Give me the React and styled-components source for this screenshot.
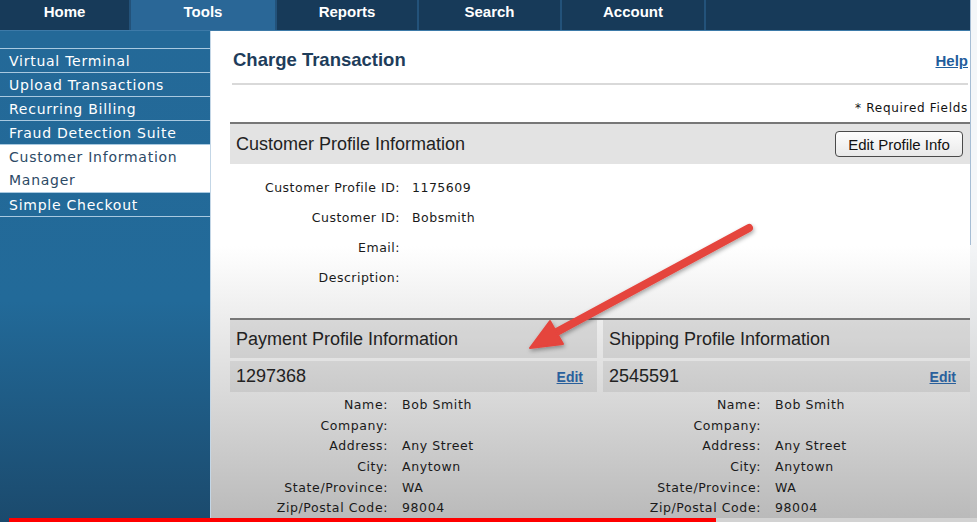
import React from 'react';
import styled, {createGlobalStyle, css} from 'styled-components';

const GlobalStyle = createGlobalStyle`
    html, body {
        margin: 0;
        padding: 0;
        background: #ffffff;
        overflow: hidden;
    }
    * {
        box-sizing: border-box;
    }
`

const Screen = styled.div`
    position: relative;
    width: 977px;
    height: 522px;
    display: grid;
    grid-template-columns: 1fr 7px;
    overflow: hidden;
    font-family: "Liberation Sans", Arial, sans-serif;
`

const Main = styled.div`
    display: flex;
    flex-direction: column;
    min-height: 0;
`

const NavBar = styled.div`
    height: 31px;
    display: flex;
    background: #173a59;
    border-bottom: 1px solid #3d7aa8;
`

const NavTab = styled.div`
    width: ${props => props.width}px;
    display: flex;
    align-items: flex-start;
    justify-content: center;
    padding-top: 3px;
    color: #ffffff;
    font-weight: bold;
    font-size: 15px;
    border-right: 2px solid #23527a;
    ${props => props.active && css`
        background: #2a6797;
    `}
`

const Body = styled.div`
    flex: 1;
    display: grid;
    grid-template-columns: 210px 1fr;
    min-height: 0;
`

const Sidebar = styled.div`
    padding-top: 17px;
    background: linear-gradient(to bottom, #246998 0%, #226a99 55%, #1b4a6d 100%);
    font-family: "DejaVu Sans", Verdana, sans-serif;
    font-size: 14px;
    letter-spacing: 0.75px;
`

const SideItem = styled.div`
    border-top: 1px solid #a9c9e0;
    color: #ffffff;
    padding: 1px 0 0 9px;
    line-height: 22px;
    height: 24px;
    ${props => props.last && css`
        border-bottom: 1px solid #a9c9e0;
        height: 25px;
    `}
    ${props => props.active && css`
        height: 48px;
        line-height: 23px;
        background: #ffffff;
        color: #2d4a66;
    `}
`

const Content = styled.div`
    padding: 0 0 0 19px;
    border-left: 1px solid #c3d6e6;
    background: linear-gradient(to bottom, #ffffff 0px, #ffffff 215px, #b9b9b9 100%);
`

const TitleRow = styled.div`
    margin: 0 2px;
    height: 54px;
    padding-top: 6px;
    display: flex;
    align-items: center;
    justify-content: space-between;
    border-bottom: 2px solid #d9d9d9;
`

const PageTitle = styled.h1`
    margin: 0 0 0 1px;
    font-size: 18.5px;
    font-weight: bold;
    color: #1e3d5b;
`

const HelpLink = styled.a`
    font-size: 15px;
    font-weight: bold;
    color: #1f5d9c;
    text-decoration: underline;
`

const Required = styled.div`
    margin: 16px 2px 7px 0;
    text-align: right;
    font-family: "DejaVu Sans", Verdana, sans-serif;
    font-size: 12px;
    line-height: 14px;
    letter-spacing: 0.7px;
    color: #111111;
`

const SectionHeader = styled.div`
    height: 42px;
    border-top: 2px solid #777777;
    background: rgba(0, 0, 0, 0.11);
    display: flex;
    align-items: center;
    justify-content: space-between;
    padding: 0 7px 0 6px;
`

const SectionTitle = styled.div`
    font-size: 18px;
    color: #222222;
`

const Button = styled.button`
    width: 128px;
    height: 26px;
    border: 1.5px solid #4a4a4a;
    border-radius: 4px;
    background: linear-gradient(to bottom, #fdfdfd, #e9e9e9);
    font-family: "Liberation Sans", Arial, sans-serif;
    font-size: 15px;
    color: #111111;
    padding: 0;
`

const FieldGrid = styled.div`
    display: grid;
    grid-template-columns: ${props => props.labelWidth}px 1fr;
    column-gap: ${props => props.gap}px;
    grid-auto-rows: ${props => props.rowHeight}px;
    align-items: center;
    padding-top: ${props => props.top}px;
    font-family: "DejaVu Sans", Verdana, sans-serif;
    font-size: 12.5px;
    letter-spacing: ${props => props.spacing}px;
    color: #1a1a1a;
`

const Label = styled.div`
    text-align: right;
`

const Value = styled.div``

const ProfileColumns = styled.div`
    margin-top: 26px;
    border-top: 2px solid #777777;
    display: grid;
    grid-template-columns: 1fr 1fr;
    column-gap: 6px;
`

const PanelTitle = styled.div`
    height: 38px;
    display: flex;
    align-items: center;
    padding-left: 6px;
    font-size: 18px;
    color: #222222;
    background: rgba(0, 0, 0, 0.085);
`

const IdRow = styled.div`
    margin-top: 3px;
    height: 31px;
    display: flex;
    align-items: center;
    justify-content: space-between;
    padding: 0 14px 0 6px;
    font-size: 18px;
    color: #222222;
    background: rgba(0, 0, 0, 0.07);
`

const EditLink = styled.a`
    font-size: 14px;
    font-weight: bold;
    color: #2a609c;
    text-decoration: underline;
`

const ScrollStrip = styled.div`
    background: linear-gradient(to bottom, #f4f6f8 0px, #f4f6f8 240px, #bdbdbd 100%);
`

const ScrollThumb = styled.div`
    height: 245px;
    width: 3px;
    border-left: 1px solid #a6bdd4;
`

const Overlay = styled.svg`
    position: absolute;
    left: 0;
    top: 0;
    pointer-events: none;
`

const ProgressTrack = styled.div`
    position: absolute;
    left: 9px;
    right: 0;
    bottom: 0;
    height: 4px;
    background: #d2d2d2;
`

const ProgressFill = styled.div`
    height: 100%;
    background: #ff0000;
`

const tabs = [
    {name: 'Home', width: 131},
    {name: 'Tools', width: 146, active: true},
    {name: 'Reports', width: 142},
    {name: 'Search', width: 143},
    {name: 'Account', width: 144},
]

const sideItems = [
    'Virtual Terminal',
    'Upload Transactions',
    'Recurring Billing',
    'Fraud Detection Suite',
]

const customerFields = [
    ['Customer Profile ID:', '1175609'],
    ['Customer ID:', 'Bobsmith'],
    ['Email:', ''],
    ['Description:', ''],
]

const addressFields = [
    ['Name:', 'Bob Smith'],
    ['Company:', ''],
    ['Address:', 'Any Street'],
    ['City:', 'Anytown'],
    ['State/Province:', 'WA'],
    ['Zip/Postal Code:', '98004'],
]

function ProfilePanel({title, id}) {
    return (
        <div>
            <PanelTitle>{title}</PanelTitle>
            <IdRow>
                <span>{id}</span>
                <EditLink>Edit</EditLink>
            </IdRow>
            <FieldGrid labelWidth={158} gap={14} rowHeight={20.7} top={2} spacing={0.6}>
                {addressFields.map(([label, value]) => (
                    <React.Fragment key={label}>
                        <Label>{label}</Label>
                        <Value>{value}</Value>
                    </React.Fragment>
                ))}
            </FieldGrid>
        </div>
    )
}

function Arrow() {
    return (
        <Overlay width="977" height="522" viewBox="0 0 977 522">
            <defs>
                <filter id="shadow" x="-20%" y="-20%" width="140%" height="140%">
                    <feDropShadow dx="1" dy="2" stdDeviation="2" floodColor="#000" floodOpacity="0.35"/>
                </filter>
            </defs>
            <g filter="url(#shadow)" fill="#e5443d" stroke="#e5443d">
                <line x1="749" y1="228" x2="553" y2="334" strokeWidth="8" strokeLinecap="round"/>
                <polygon points="530,348 550,321 563,344" strokeWidth="2" strokeLinejoin="round"/>
            </g>
        </Overlay>
    )
}

export default function App() {
    return (
        <Screen>
            <GlobalStyle/>
            <Main>
                <NavBar>
                    {tabs.map(tab => (
                        <NavTab key={tab.name} width={tab.width} active={tab.active}>
                            {tab.name}
                        </NavTab>
                    ))}
                </NavBar>
                <Body>
                    <Sidebar>
                        {sideItems.map(item => <SideItem key={item}>{item}</SideItem>)}
                        <SideItem active>Customer Information<br/>Manager</SideItem>
                        <SideItem last>Simple Checkout</SideItem>
                    </Sidebar>
                    <Content>
                        <TitleRow>
                            <PageTitle>Charge Transaction</PageTitle>
                            <HelpLink>Help</HelpLink>
                        </TitleRow>
                        <Required>* Required Fields</Required>
                        <SectionHeader>
                            <SectionTitle>Customer Profile Information</SectionTitle>
                            <Button>Edit Profile Info</Button>
                        </SectionHeader>
                        <FieldGrid labelWidth={170} gap={12} rowHeight={30} top={8} spacing={0.5}>
                            {customerFields.map(([label, value]) => (
                                <React.Fragment key={label}>
                                    <Label>{label}</Label>
                                    <Value>{value}</Value>
                                </React.Fragment>
                            ))}
                        </FieldGrid>
                        <ProfileColumns>
                            <ProfilePanel title="Payment Profile Information" id="1297368"/>
                            <ProfilePanel title="Shipping Profile Information" id="2545591"/>
                        </ProfileColumns>
                    </Content>
                </Body>
            </Main>
            <ScrollStrip>
                <ScrollThumb/>
            </ScrollStrip>
            <Arrow/>
            <ProgressTrack>
                <ProgressFill style={{width: '73%'}}/>
            </ProgressTrack>
        </Screen>
    )
}
